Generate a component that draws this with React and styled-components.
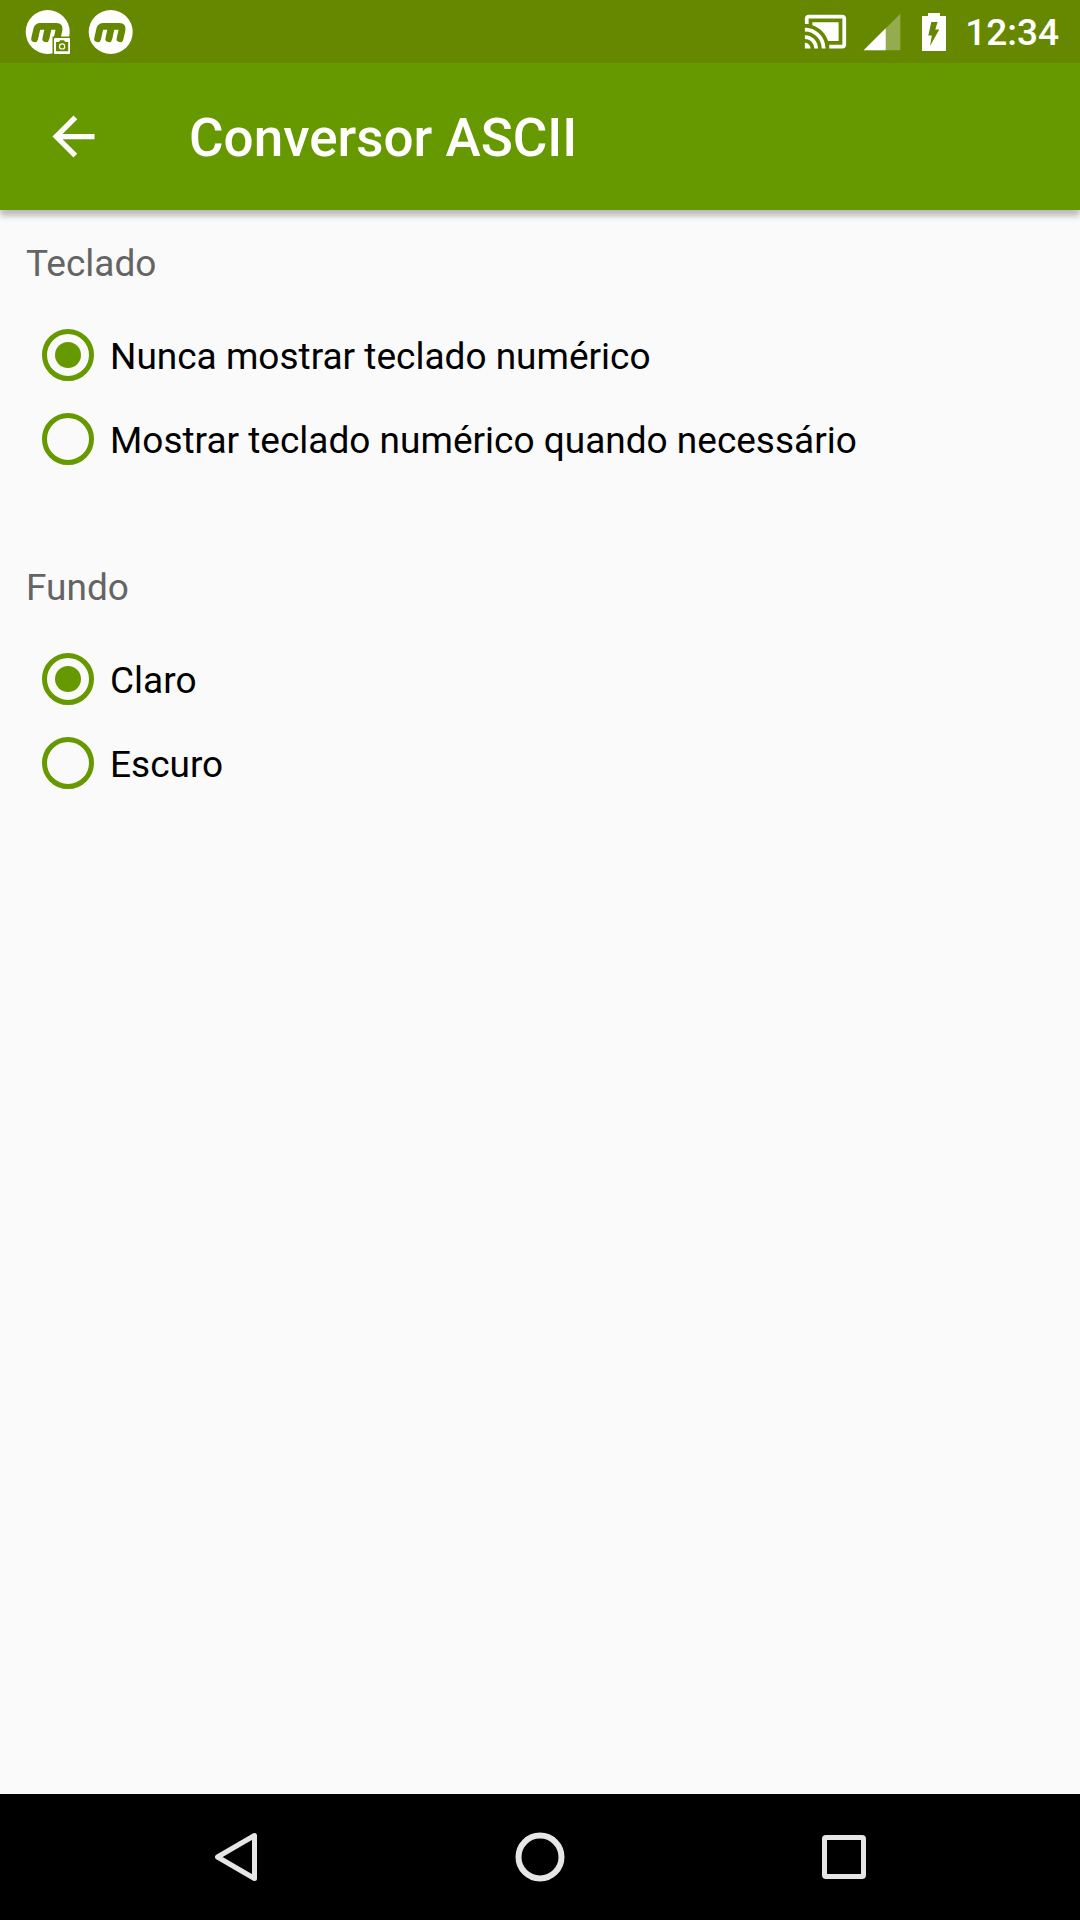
import React, { useState } from "react";
import styled, { createGlobalStyle } from "styled-components";

const GREEN = "#669900";

const GlobalStyle = createGlobalStyle`
  *, *::before, *::after { box-sizing: border-box; }
  body { margin: 0; background: #fafafa; font-family: Roboto, "Liberation Sans", sans-serif; }
`;

const Screen = styled.div`
  display: flex;
  flex-direction: column;
  min-height: 100vh;
  background: #fafafa;
`;

const StatusBar = styled.div`
  display: flex;
  align-items: center;
  justify-content: space-between;
  height: 63px;
  padding: 0 21px 0 25px;
  background: #668800;
  color: #fff;
`;

const StatusGroup = styled.div`
  display: flex;
  align-items: center;
  gap: ${(p) => p.$gap}px;
`;

const Glyph = styled.svg`
  display: block;
  flex: none;
  width: ${(p) => p.$w}px;
  height: ${(p) => p.$h || p.$w}px;
`;

const Clock = styled.time`
  padding-top: 3px;
  font-size: 37px;
  line-height: 44px;
  font-weight: 500;
`;

const AppBar = styled.header`
  display: flex;
  align-items: center;
  gap: 42px;
  height: 147px;
  background: ${GREEN};
  box-shadow: 0 6px 6px rgba(0, 0, 0, 0.25);
`;

const IconButton = styled.button`
  display: flex;
  align-items: center;
  justify-content: center;
  width: 147px;
  height: 147px;
  padding: 0;
  border: 0;
  background: none;
  cursor: pointer;
`;

const Title = styled.h1`
  margin: 0;
  padding-top: 3px;
  color: #fff;
  font-size: 53px;
  line-height: 62px;
  font-weight: 500;
`;

const Content = styled.main`
  display: flex;
  flex: 1;
  flex-direction: column;
  gap: 85px;
  padding: 32px 26px;
`;

const Group = styled.fieldset`
  min-width: 0;
  margin: 0;
  padding: 0;
  border: 0;
`;

const Legend = styled.legend`
  padding: 0;
  margin-bottom: 27px;
  color: #646464;
  font-size: 37px;
  line-height: 44px;
`;

const Option = styled.label`
  display: flex;
  align-items: center;
  gap: 16px;
  height: 84px;
  padding-left: 16px;
  color: #000;
  font-size: 37px;
  line-height: 44px;
  cursor: pointer;
`;

const OptionText = styled.span`
  padding-top: 3px;
`;

const Radio = styled.input`
  appearance: none;
  display: grid;
  place-items: center;
  flex: none;
  width: 52px;
  height: 52px;
  margin: 0;
  border: 5px solid ${GREEN};
  border-radius: 50%;

  &:checked::before {
    content: "";
    width: 26px;
    height: 26px;
    border-radius: 50%;
    background: ${GREEN};
  }
`;

const NavBar = styled.nav`
  display: flex;
  justify-content: center;
  height: 126px;
  background: #000;
`;

const NavButton = styled.button`
  display: flex;
  align-items: center;
  justify-content: center;
  width: 304px;
  padding: 0;
  border: 0;
  background: none;
  cursor: pointer;
`;

function BrandMark({ camera }) {
  return (
    <Glyph $w={46} viewBox="0 0 46 46" aria-hidden="true">
      <circle cx="22.7" cy="23" r="22" fill="#fff" />
      <path
        d="M9.6 29.8 L11.7 20.4 Q12.5 17.4 15.4 17.4 H31.6 Q34.8 17.4 34.1 20.4 L32 29.8 M20.8 29.8 L23.4 18"
        fill="none"
        stroke="#668800"
        strokeWidth="6.8"
        strokeLinecap="round"
        strokeLinejoin="round"
      />
      {camera && (
        <g>
          <rect x="27.5" y="27.5" width="18" height="18.5" fill="#668800" />
          <rect x="29" y="29" width="16" height="16" rx="1" fill="#fff" />
          <path d="M31 33h3l1.2-1.8h3.8l1.2 1.8h3v9.2H31z" fill="#668800" />
          <circle cx="37.1" cy="37.4" r="2.6" fill="none" stroke="#fff" strokeWidth="1.2" />
        </g>
      )}
    </Glyph>
  );
}

function CastIcon() {
  return (
    <Glyph $w={45} viewBox="0 0 24 24" fill="#fff" aria-hidden="true">
      <path d="M1 18v3h3c0-1.66-1.34-3-3-3zm0-4v2c2.76 0 5 2.24 5 5h2c0-3.87-3.13-7-7-7zm18-7H5v1.63c3.96 1.28 7.09 4.41 8.37 8.37H19V7zM1 10v2c4.97 0 9 4.03 9 9h2c0-6.08-4.93-11-11-11zm20-7H3c-1.1 0-2 .9-2 2v3h2V5h18v14h-7v2h7c1.1 0 2-.9 2-2V5c0-1.1-.9-2-2-2z" />
    </Glyph>
  );
}

function SignalIcon() {
  return (
    <Glyph $w={44} viewBox="0 0 24 24" fill="#fff" aria-hidden="true">
      <path d="M2 22h20V2z" fillOpacity="0.3" />
      <path d="M14 10L2 22h12z" />
    </Glyph>
  );
}

function BatteryIcon() {
  return (
    <Glyph $w={37} $h={38} viewBox="-6 0 37 38" aria-hidden="true">
      <path
        fill="#fff"
        fillRule="evenodd"
        d="M6 0h12v3h6v35H0V3h6z M9.3 9L6.3 22.5h3.5L8 33 17.3 16.5h-4L15.6 9z"
      />
    </Glyph>
  );
}

function RadioGroup({ name, title, options }) {
  const [value, setValue] = useState(options[0]);
  return (
    <Group>
      <Legend>{title}</Legend>
      {options.map((text) => (
        <Option key={text}>
          <Radio
            type="radio"
            name={name}
            value={text}
            checked={value === text}
            onChange={() => setValue(text)}
          />
          <OptionText>{text}</OptionText>
        </Option>
      ))}
    </Group>
  );
}

export default function App() {
  return (
    <Screen>
      <GlobalStyle />
      <StatusBar>
        <StatusGroup $gap={17}>
          <BrandMark camera />
          <BrandMark />
        </StatusGroup>
        <StatusGroup $gap={12}>
          <CastIcon />
          <SignalIcon />
          <BatteryIcon />
          <Clock>12:34</Clock>
        </StatusGroup>
      </StatusBar>

      <AppBar>
        <IconButton type="button" aria-label="Voltar">
          <Glyph $w={63} viewBox="0 0 24 24" fill="#fff" aria-hidden="true">
            <path d="M20 11H7.83l5.59-5.59L12 4l-8 8 8 8 1.41-1.41L7.83 13H20v-2z" />
          </Glyph>
        </IconButton>
        <Title>Conversor ASCII</Title>
      </AppBar>

      <Content>
        <RadioGroup
          name="teclado"
          title="Teclado"
          options={["Nunca mostrar teclado numérico", "Mostrar teclado numérico quando necessário"]}
        />
        <RadioGroup name="fundo" title="Fundo" options={["Claro", "Escuro"]} />
      </Content>

      <NavBar>
        <NavButton type="button" aria-label="Voltar">
          <Glyph $w={52} viewBox="0 0 52 52" fill="none" stroke="#e6e6e6" aria-hidden="true">
            <path d="M44.5 4.5v43L7.5 26z" strokeWidth="5" strokeLinejoin="round" />
          </Glyph>
        </NavButton>
        <NavButton type="button" aria-label="Início">
          <Glyph $w={52} viewBox="0 0 52 52" fill="none" stroke="#e6e6e6" aria-hidden="true">
            <circle cx="26" cy="26" r="21.5" strokeWidth="6" />
          </Glyph>
        </NavButton>
        <NavButton type="button" aria-label="Recentes">
          <Glyph $w={52} viewBox="0 0 52 52" fill="none" stroke="#e6e6e6" aria-hidden="true">
            <rect x="6.5" y="6.5" width="39" height="39" rx="1.5" strokeWidth="5" />
          </Glyph>
        </NavButton>
      </NavBar>
    </Screen>
  );
}
